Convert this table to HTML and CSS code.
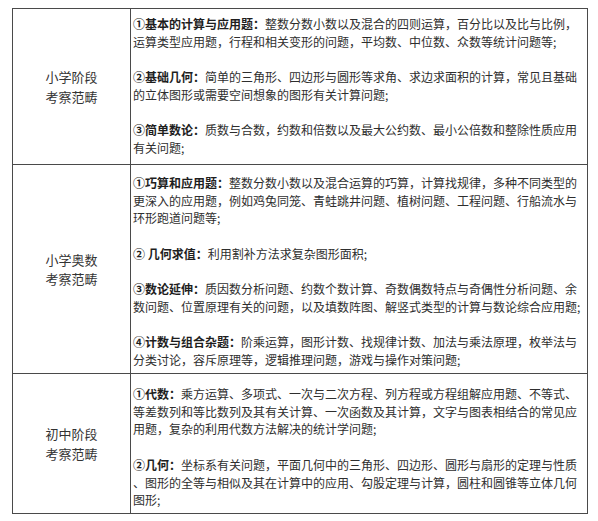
FILE: index.html
```html
<!DOCTYPE html>
<html lang="zh-CN">
<head>
<meta charset="utf-8">
<link rel="stylesheet" href="styles.css">
</head>
<body>
<table class="scope">
  <tr class="row row-1">
    <th class="stage">小学阶段<br>考察范畴</th>
    <td class="detail">
      <p><span class="ln"><b>①基本的计算与应用题：</b>整数分数小数以及混合的四则运算，百分比以及比与比例，</span><span class="ln end">运算类型应用题，行程和相关变形的问题，平均数、中位数、众数等统计问题等;</span></p>
      <p><span class="ln"><b>②基础几何：</b>简单的三角形、四边形与圆形等求角、求边求面积的计算，常见且基础</span><span class="ln end">的立体图形或需要空间想象的图形有关计算问题;</span></p>
      <p><span class="ln"><b>③简单数论：</b>质数与合数，约数和倍数以及最大公约数、最小公倍数和整除性质应用</span><span class="ln end">有关问题;</span></p>
    </td>
  </tr>
  <tr class="row row-2">
    <th class="stage">小学奥数<br>考察范畴</th>
    <td class="detail">
      <p><span class="ln"><b>①巧算和应用题：</b>整数分数小数以及混合运算的巧算，计算找规律，多种不同类型的</span><span class="ln">更深入的应用题，例如鸡兔同笼、青蛙跳井问题、植树问题、工程问题、行船流水与</span><span class="ln end">环形跑道问题等;</span></p>
      <p><span class="ln end"><b>② 几何求值：</b>利用割补方法求复杂图形面积;</span></p>
      <p><span class="ln"><b>③数论延伸：</b>质因数分析问题、约数个数计算、奇数偶数特点与奇偶性分析问题、余</span><span class="ln">数问题、位置原理有关的问题，以及填数阵图、解竖式类型的计算与数论综合应用题;</span></p>
      <p><span class="ln"><b>④计数与组合杂题：</b>阶乘运算，图形计数、找规律计数、加法与乘法原理，枚举法与</span><span class="ln end">分类讨论，容斥原理等，逻辑推理问题，游戏与操作对策问题;</span></p>
    </td>
  </tr>
  <tr class="row row-3">
    <th class="stage">初中阶段<br>考察范畴</th>
    <td class="detail">
      <p><span class="ln"><b>①代数：</b>乘方运算、多项式、一次与二次方程、列方程或方程组解应用题、不等式、</span><span class="ln">等差数列和等比数列及其有关计算、一次函数及其计算，文字与图表相结合的常见应</span><span class="ln end">用题，复杂的利用代数方法解决的统计学问题;</span></p>
      <p><span class="ln"><b>②几何：</b>坐标系有关问题，平面几何中的三角形、四边形、圆形与扇形的定理与性质</span><span class="ln">、图形的全等与相似及其在计算中的应用、勾股定理与计算，圆柱和圆锥等立体几何</span><span class="ln end">图形;</span></p>
    </td>
  </tr>
</table>
</body>
</html>
```
FILE: styles.css
```css
html, body {
  margin: 0;
  padding: 0;
  background: #ffffff;
}

body {
  padding: 8px 0 0 12px;
  font-family: "Noto Sans CJK SC", "Noto Sans", sans-serif;
  color: #2e2e2e;
}

.scope {
  border-collapse: collapse;
  width: 576px;
  table-layout: fixed;
}

.scope th,
.scope td {
  border: 1px solid #4a4a4a;
  padding: 0;
}

.stage {
  width: 117px;
  font-size: 13px;
  font-weight: normal;
  line-height: 19.5px;
  text-align: center;
  vertical-align: middle;
  color: #333333;
}

.detail {
  vertical-align: top;
  padding: 6px 10px 0 2px !important;
  font-size: 12px;
  line-height: 17.7px;
}

.detail p {
  margin: 0;
}

.detail p + p {
  margin-top: 17.7px;
}

.ln {
  display: block;
  white-space: nowrap;
  text-align: justify;
  text-align-last: justify;
  text-justify: inter-character;
}

.ln.end {
  text-align-last: left;
}

.detail b {
  font-weight: bold;
  color: #1e1e1e;
}

.row-1 { height: 156px; }
.row-2 { height: 209px; }
.row-3 { height: 140px; }

.row-2 .detail { padding-top: 9px !important; }
.row-3 .detail { padding-top: 11px !important; }
```
